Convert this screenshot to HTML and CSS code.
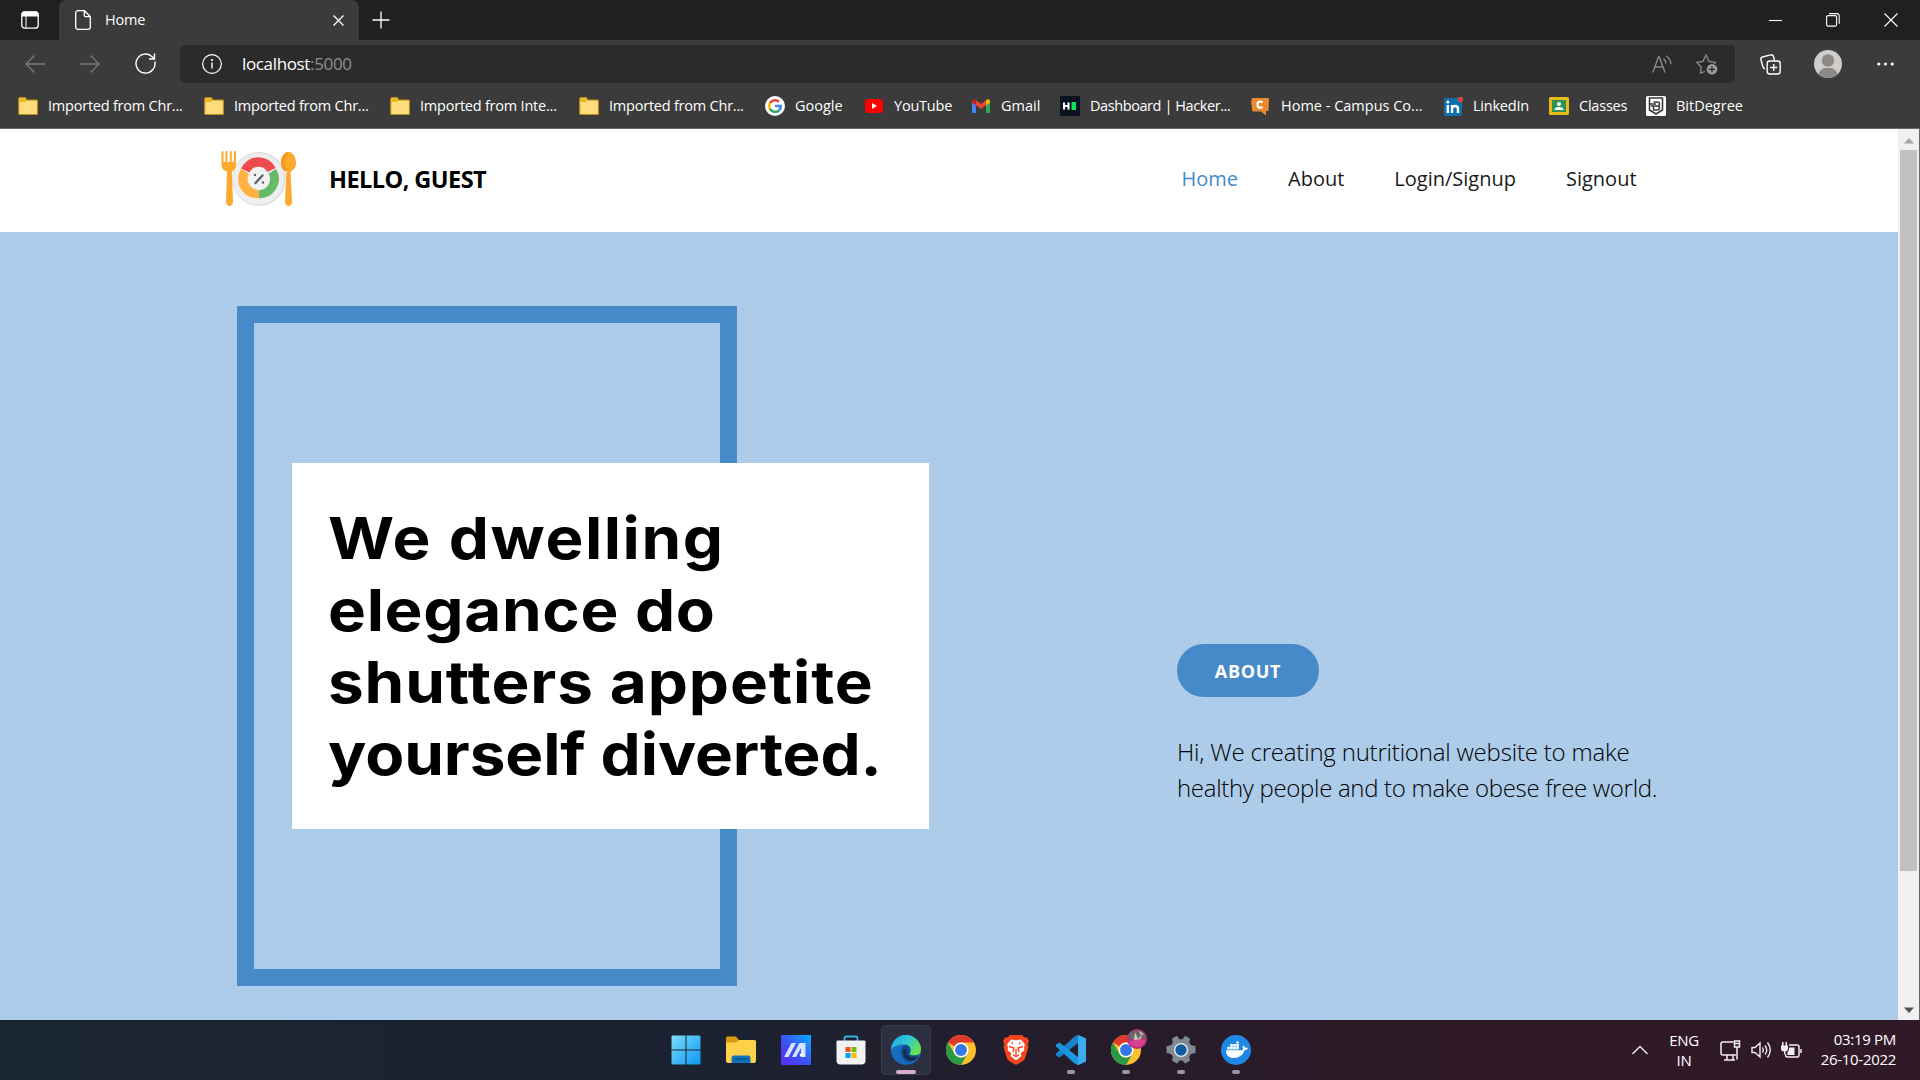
FILE: index.html
```html
<!DOCTYPE html>
<html lang="en">
<head>
<meta charset="utf-8">
<title>Home</title>
<link rel="stylesheet" href="styles.css">
</head>
<body>
<div class="screen">
  <div class="tabbar">
    <div class="tab-actions"><svg width="18" height="18" viewBox="0 0 18 18"><rect x=".8" y=".8" width="16.4" height="16.4" rx="3" fill="none" stroke="#fff" stroke-width="1.3"/><path d="M.5 5.5V3A2.5 2.5 0 0 1 3 .5h12A2.500 2.500 0 0 1 17.500 3v2.500z" fill="#fff"/><path d="M5 5v12" stroke="#fff"/></svg></div>
    <div class="tab">
      <svg width="16" height="20" viewBox="0 0 16 20" fill="none" stroke="#fff" stroke-width="1.300"><path d="M3 .7h6.500l5.800 5.800V17a2.300 2.300 0 0 1-2.300 2.300H3A2.300 2.300 0 0 1 .7 17V3A2.300 2.300 0 0 1 3 .7zM9.300 1v4.200a1.500 1.500 0 0 0 1.500 1.500H15"/></svg>
      <span class="tab-title t">Home</span>
      <svg class="tab-close" width="11" height="11" viewBox="0 0 11 11" stroke="#fff" stroke-width="1.300"><path d="M.5.5l10 10M10.500.5l-10 10"/></svg>
    </div>
    <svg class="new-tab" width="18" height="18" viewBox="0 0 18 18" stroke="#fff" stroke-width="1.300"><path d="M9 .5v17M.5 9h17"/></svg>
    <div class="window-controls">
      <svg width="13" height="13" viewBox="0 0 13 13" stroke="#fff" stroke-width="1.100"><path d="M0 6.500h13"/></svg>
      <svg width="14" height="14" viewBox="0 0 14 14" fill="none" stroke="#fff" stroke-width="1.100"><rect x=".6" y="2.600" width="10" height="10.500" rx="1.500"/><path d="M3 .6h8a2.200 2.200 0 0 1 2.200 2.200v8"/></svg>
      <svg width="14" height="14" viewBox="0 0 14 14" stroke="#fff" stroke-width="1.100"><path d="M.5.5l13 13M13.500.5l-13 13"/></svg>
    </div>
  </div>

  <div class="toolbar">
    <svg class="nav-icon" width="20" height="18" viewBox="0 0 20 18" fill="none" stroke="#7b7b7b" stroke-width="1.300"><path d="M20 9H1M9.500.5L1 9l8.500 8.500"/></svg>
    <svg class="nav-icon forward" width="20" height="18" viewBox="0 0 20 18" fill="none" stroke="#7b7b7b" stroke-width="1.300"><path d="M0 9h19M10.500.5L19 9l-8.500 8.500"/></svg>
    <svg class="nav-icon reload" width="21" height="21" viewBox="0 0 21 21" fill="none" stroke="#fff" stroke-width="1.400"><path d="M19.800 8.500A9.500 9.500 0 1 1 16.500 3.200L19 5.500M19.500.5v5.500H14"/></svg>
    <div class="address">
      <svg width="20" height="20" viewBox="0 0 20 20" fill="none" stroke="#fff" stroke-width="1.200"><circle cx="10" cy="10" r="9.300"/><path d="M10 8.500v6" stroke-width="1.400"/><circle cx="10" cy="6" r=".5" fill="#fff"/></svg>
      <span class="url"><span class="t">localhost</span><span class="port t">:5000</span></span>
      <svg class="read" width="20" height="18" viewBox="0 0 20 18" fill="none" stroke="#8b8b8b" stroke-width="1.300"><path d="M.8 17.500L6.500 2h.8L13 17.500M3 12h8M11.500 3.500q2.500 2 2.200 5M14 .8q4.800 3 4.800 8.500"/></svg>
      <svg class="fav" width="22" height="21" viewBox="0 0 22 21" fill="none" stroke="#8b8b8b" stroke-width="1.300"><path d="M9 17.500L4.500 19l.7-6L.8 8.400 7 7.400 10 1l3 6.400 6.500 1L18 10"/><circle cx="16" cy="15.300" r="5.300" fill="#9a9a9a" stroke="none"/><path d="M16 12.300v6M13 15.300h6" stroke="#2b2b2b"/></svg>
    </div>
    <svg class="collections" width="21" height="21" viewBox="0 0 21 21" fill="none" stroke="#fff" stroke-width="1.400"><rect x="7.200" y="7" width="13" height="13" rx="2.500"/><path d="M13.700 10v7M10.200 13.500h7M14.500 6.500l-1-4a2.200 2.200 0 0 0-2.700-1.600L2.400 3A2.200 2.200 0 0 0 .9 5.700L3 13a2.300 2.300 0 0 0 2 1.700"/></svg>
    <svg class="avatar" width="28" height="28" viewBox="0 0 28 28"><circle cx="14" cy="14" r="14" fill="#cfcdcb"/><circle cx="14" cy="10.500" r="6.200" fill="#8b8886"/><path d="M4.500 24.200q1.500-5.700 7-6.200h5q5.500.5 7 6.200A14 14 0 0 1 4.500 24.200z" fill="#8b8886"/></svg>
    <svg class="more" width="17" height="4" viewBox="0 0 17 4" fill="#fff"><circle cx="1.800" cy="2" r="1.600"/><circle cx="8.500" cy="2" r="1.600"/><circle cx="15.200" cy="2" r="1.600"/></svg>
  </div>

  <svg class="defs" width="0" height="0"><defs>
    <symbol id="folder" viewBox="0 0 20 18"><path d="M.7 2.500q0-1.800 1.500-1.800h5L9 3h9.500q1 0 1 1v12.500q0 1-1 1H1.700q-1 0-1-1z" fill="#ffdc7c" stroke="#b98a1c" stroke-width="1.200"/><path d="M1.200 5V2.300Q1.200 1.200 2.300 1.200H7l1.500 2L7 5z" fill="#e8b820"/></symbol>
    <symbol id="chrome" viewBox="0 0 48 48"><circle cx="24" cy="24" r="24" fill="#fbc02d"/><path d="M3.200 12A24 24 0 0 1 44.800 12H24A12 12 0 0 0 13.600 18z" fill="#dd3a2c"/><path d="M3.200 12A24 24 0 0 0 24 48l10.400-18A12 12 0 0 1 13.600 30z" fill="#2a9a46"/><circle cx="24" cy="24" r="12" fill="#fff"/><circle cx="24" cy="24" r="9.500" fill="#3478e8"/></symbol>
  </defs></svg>

  <div class="bookmarks">
    <div class="bm snug"><svg width="20" height="18"><use href="#folder"/></svg><span class="t">Imported from Chr...</span></div>
    <div class="bm snug"><svg width="20" height="18"><use href="#folder"/></svg><span class="t">Imported from Chr...</span></div>
    <div class="bm snug"><svg width="20" height="18"><use href="#folder"/></svg><span class="t">Imported from Inte...</span></div>
    <div class="bm snug"><svg width="20" height="18"><use href="#folder"/></svg><span class="t">Imported from Chr...</span></div>
    <div class="bm"><svg width="20" height="20" viewBox="0 0 20 20" fill="none" stroke-width="2.500"><circle cx="10" cy="10" r="10" fill="#fff"/><path d="M14 5.800A5.800 5.800 0 0 0 5 7.200" stroke="#ea4335"/><path d="M5 7.200a5.800 5.800 0 0 0 0 5.600" stroke="#fbbc05"/><path d="M5 12.800a5.800 5.800 0 0 0 9 1.500" stroke="#34a853"/><path d="M14 14.300a5.800 5.800 0 0 0 1.800-4.300H10" stroke="#4285f4"/></svg><span class="t">Google</span></div>
    <div class="bm snug wide"><svg width="18" height="14" viewBox="0 0 18 14"><rect width="18" height="14" rx="3.500" fill="#f00"/><path d="M7 4l5 3-5 3z" fill="#fff"/></svg><span class="t">YouTube</span></div>
    <div class="bm wide"><svg width="18" height="14" viewBox="0 0 18 14"><path d="M0 2.500l4 3V14H1.200Q0 14 0 12.800z" fill="#4285f4"/><path d="M18 2.500l-4 3V14h2.800q1.200 0 1.200-1.200z" fill="#34a853"/><path d="M4 1.200L9 5l5-3.800v5L9 10 4 6.200z" fill="#ea4335"/><path d="M0 2.500C0 .2 2.300-.3 4 1.200v5L0 3.500z" fill="#c5221f"/><path d="M18 2.500c0-2.300-2.300-2.800-4-1.300v5l4-2.700z" fill="#fbbc04"/></svg><span class="t">Gmail</span></div>
    <div class="bm tight"><svg width="20" height="20" viewBox="0 0 20 20"><path fill="#0b1320" d="M0 0h20v20H0z"/><path d="M4 6.500v7M8.500 6.500v7M4 10h4.500" stroke="#fff" stroke-width="2"/><path fill="#05e560" d="M11.500 6H16v8h-4.500z"/></svg><span class="t">Dashboard | Hacker...</span></div>
    <div class="bm wider"><svg width="18" height="19" viewBox="0 0 18 19"><path d="M1 1h17l-.500 13H15v4.500L10 14.500H1.500L0 5z" fill="#e98a2e"/><path d="M11.500 5.300Q6.500 3 6.500 7.500t5 2.700" fill="none" stroke="#fff" stroke-width="2.200"/></svg><span class="t">Home - Campus Co...</span></div>
    <div class="bm snug"><svg width="19" height="19" viewBox="0 0 19 19"><rect y="1" width="18" height="18" rx="1" fill="#0f6fae"/><path d="M3.800 8v8M8 8v8M8 11.500q.5-2.500 3-2.500 3 0 3 3v4" fill="none" stroke="#fff" stroke-width="2.400"/><circle cx="3.800" cy="5" r="1.500" fill="#fff"/><circle cx="16.500" cy="2.500" r="2.800" fill="#d8483f"/></svg><span class="t">LinkedIn</span></div>
    <div class="bm snug"><svg width="20" height="18" viewBox="0 0 20 18"><rect width="20" height="18" rx="1.500" fill="#e9b91e"/><path fill="#2f9450" d="M3 3h14v12H3z"/><circle cx="10" cy="7" r="2" fill="#fff"/><path d="M5.500 13q0-3 4.500-3t4.500 3z" fill="#fff"/></svg><span class="t">Classes</span></div>
    <div class="bm"><svg width="20" height="20" viewBox="0 0 20 20" fill="none" stroke="#3b3b40"><rect width="20" height="20" rx="1.500" fill="#fff" stroke="none"/><path d="M3.500 2h13v12L10 18l-6.500-4z" stroke-width="1.600"/><path d="M7.500 6H11q2.500 0 2.500 2T11 10H5m2.500 0H11q2.500 0 2.500 2t-2.500 2H7.500zM4 8h6" stroke-width="1.500"/></svg><span class="t">BitDegree</span></div>
  </div>

  <div class="viewport">
    <div class="page">
      <header class="site-header">
        <svg class="logo" width="76" height="58" viewBox="0 0 76 58">
          <circle cx="38" cy="29" r="27" fill="#dfdfe1"/><circle cx="37.500" cy="29" r="25.500" fill="#eeeeef"/>
          <g transform="translate(2 0)"><g fill="none" stroke-width="9.500"><path d="M22.300 20.500A14.500 14.500 0 0 1 48.500 20" stroke="#ee4c4c"/><path d="M49 21.500A14.500 14.500 0 0 1 36 43.500" stroke="#66bb6a"/><path d="M36 43.500A14.500 14.500 0 0 1 22 21.500" stroke="#ffb142"/></g>
          <circle cx="36" cy="29" r="11" fill="#f2f2f3"/><path d="M32.500 33l7-7.500" stroke="#5b6470" stroke-width="2.400" stroke-linecap="round"/><circle cx="32" cy="25" r="1.200" fill="#5b6470"/><circle cx="40" cy="32.500" r="1.200" fill="#5b6470"/></g>
          <g fill="#fda92e"><path d="M.5 1.500q1-1 2 0V12h2V1.500q1-1 2 0V12h2.300V1.500q1-1 2 0V12h2.200V1.500q1-1 2 0V15q0 5-4.200 6.500l1.200 30.500q-.5 4-3.500 4T5 52l1-30.500Q.5 20 .5 15z"/><path d="M67.500 2c5 0 7.500 6 7.500 10.500 0 5-2.500 8-5.500 9l1.500 30.500q-.5 4-3.500 4T64 52l1.500-30.500c-3-1-5.500-4-5.500-9C60 8 62.500 2 67.500 2z"/></g>
          <path d="M67.500 2c-5 0-7.500 6-7.500 10.500 0 5 3 9 5.500 9Q61 12 67.500 2z" fill="#f59a20"/>
        </svg>
        <h2 class="greeting"><span class="t">HELLO, GUEST</span></h2>
        <nav class="site-nav"><a class="active t">Home</a><a class="t">About</a><a class="t">Login/Signup</a><a class="t">Signout</a></nav>
      </header>
      <main class="hero">
        <div class="frame">
          <h1 class="headline"><span class="l1 t">We dwelling</span><span class="l2 t">elegance do</span><span class="l3 t">shutters appetite</span><span class="l4 t">yourself diverted.</span></h1>
        </div>
        <section class="about">
          <a class="pill"><span class="t">ABOUT</span></a>
          <p><span class="intro t">Hi, We creating nutritional website to make</span><br><span class="t">healthy people and to make obese free world.</span></p>
        </section>
      </main>
    </div>
    <div class="scrollbar">
      <svg class="arrow" width="10" height="6" viewBox="0 0 10 6"><path d="M5 0l5 5.500H0z" fill="#a3a3a3"/></svg>
      <div class="thumb"></div>
      <svg class="arrow down" width="10" height="6" viewBox="0 0 10 6"><path d="M5 6l5-5.500H0z" fill="#505050"/></svg>
    </div>
  </div>

  <div class="taskbar">
    <div class="apps">
      <div class="app"><svg width="30" height="30" viewBox="0 0 30 30"><defs><linearGradient id="win" x2="1" y2="1"><stop stop-color="#7fdcfb"/><stop offset="1" stop-color="#0a98f0"/></linearGradient></defs><path d="M1.500.5h13v14h-14v-13zM15.500.5h13l1 1v13h-14zM.5 15.500h14v14h-13l-1-1zM15.500 15.500h14v13l-1 1h-13z" fill="url(#win)"/></svg></div>
      <div class="app"><svg width="30" height="28" viewBox="0 0 30 28"><path d="M0 8V2Q0 .5 1.500.5H10L13 4h8v5z" fill="#d99a10"/><path d="M0 6.500h10L13 4h15.500Q30 4 30 5.500V25q0 2-2 2H2q-2 0-2-2z" fill="#ffd04a"/><path d="M5.500 27v-5q0-2.500 2.500-2.500h14q2.500 0 2.500 2.500v5z" fill="#1273b8"/><path d="M8 23h14" stroke="#0a4d88" stroke-width="1.200"/></svg></div>
      <div class="app"><svg width="30" height="30" viewBox="0 0 30 30"><defs><linearGradient id="asus" x1="0" y1="1" x2="1" y2="0"><stop stop-color="#5b2bf2"/><stop offset=".5" stop-color="#3a55f5"/><stop offset="1" stop-color="#05b0ff"/></linearGradient></defs><path fill="url(#asus)" d="M0 0h30v30H0z"/><path d="M3 22L10.500 8H15L7.500 22zM11 22L18.500 8h6v14H20v-9l-5 9z" fill="#d9e2ff"/><circle cx="20.500" cy="20" r="1.800" fill="#fff"/></svg></div>
      <div class="app"><svg width="30" height="30" viewBox="0 0 30 30"><path d="M8.500 7V3q0-1.500 1.500-1.500h10Q21.500 1.500 21.500 3v4" fill="none" stroke="#37b3e6" stroke-width="1.800"/><path d="M.5 6.500Q.5 5.500 1.500 5.500h27q1 0 1 1v19q0 4-4 4h-21q-4 0-4-4z" fill="#f2f2f2"/><path fill="#f25022" d="M9.500 12h5v5h-5z"/><path fill="#7fba00" d="M15.500 12h5v5h-5z"/><path fill="#00a4ef" d="M9.500 18h5v5h-5z"/><path fill="#ffb900" d="M15.500 18h5v5h-5z"/></svg></div>
      <div class="app current"><svg width="30" height="30" viewBox="0 0 30 30"><defs><linearGradient id="edge1" x1="0" y1="0" x2="1" y2=".6"><stop stop-color="#1d9ee0"/><stop offset=".5" stop-color="#2cc6d4"/><stop offset="1" stop-color="#6be150"/></linearGradient></defs><circle cx="15" cy="15" r="15" fill="#176dbd"/><path d="M0 15A15 15 0 0 1 30 14.500c0 4-3 6-7 6-4.500 0-5-1.500-4-3 1-2 .5-8-6.500-8C6 9.500 1 12 0 15z" fill="url(#edge1)"/><path d="M10 16c0-3 2-5 4-6.300 5 0 6.500 5 5 7.800-1 1.500-.5 3 4 3 2 0 4-.5 5-1.500C26 25 21 27 17.500 27 13 27 10 21 10 16z" fill="#0d4b91"/><path d="M12 17c0 6 5 9 10 8.500 2-.5 4-2 5.500-4.500-4 2.500-9.500 1.500-11-.5-1.500-1.500-1.500-4 0-6-2-1-4.500.5-4.500 2.500z" fill="#1b2b43"/></svg><i class="run"></i></div>
      <div class="app"><svg width="30" height="30"><use href="#chrome"/></svg></div>
      <div class="app"><svg width="26" height="30" viewBox="0 0 26 30"><path d="M7 0h12l2.500 2.500 2.500-.3 2 4-1.200 3 .7 2.500-3.500 12Q20.500 26 13 30 5.500 26 4 23.700L.5 11.700l.7-2.500L0 6.200l2-4 2.500.3z" fill="#f7451c"/><path d="M13 5.200l5-.7 4 5-1 3.500.500 2-4 3.500 1 2.500L13 25.500 7.500 21l1-2.500-4-3.500.500-2-1-3.500 4-5z" fill="#fff"/><path d="M6 11.500l5 1.500-1 4M20 11.500L15 13l1 4M10 20l3 1.500 3-1.500M13 14v6M8.500 7.500L10 9M17.500 7.500L16 9" fill="none" stroke="#f7451c" stroke-width="1.400"/></svg></div>
      <div class="app"><svg width="30" height="30" viewBox="0 0 30 30"><path d="M22 0l8 3.500v23L22 30l-4-3.500L22 22V8L3.500 22.500 0 20.500v-2L18.500 1.500z" fill="#1a82cc"/><path d="M22 22L3.500 7.500 0 9.500v2L18.500 28.500 22 30z" fill="#1b95dd"/><path d="M22 0l8 3.500v23L22 30z" fill="#3aacee"/></svg><i class="run"></i></div>
      <div class="app"><svg width="30" height="30"><use href="#chrome"/></svg><svg class="badge" width="20" height="20" viewBox="0 0 20 20"><circle cx="10" cy="10" r="10" fill="#b92f78"/><path d="M.5 9A10 10 0 0 1 19.500 8Q14 12 10 11t-9.500-2z" fill="#6c6460"/><path d="M3 5l4 5 1-7 3 7 5-6-3 7-5 1zM12 2l2 5 3-2z" fill="#cfc4b8"/><path d="M1.500 13q8-4 17-2-2 7-9 7-6-1-8-5z" fill="#d64392"/></svg><i class="run"></i></div>
      <div class="app"><svg width="30" height="30" viewBox="0 0 30 30"><path d="M11 .8l2.500 3.500h3L19 .8l5 2.700-.8 4.200 1.800 2.500 4.500.8v7l-4.500 1-1.800 2.500.8 4.200-5 2.700-2.500-3h-3l-2.500 3-5-2.700.8-4.200L5 19 .5 18v-7l4.500-.8 1.800-2.500L6 3.500z" fill="#808891"/><circle cx="15" cy="15" r="7" fill="#eee"/><circle cx="15" cy="15" r="5.700" fill="#0f5b9c"/></svg><i class="run"></i></div>
      <div class="app"><svg width="30" height="30" viewBox="0 0 30 30"><circle cx="15" cy="15" r="15" fill="#1e88e5"/><path d="M5 15.300h16.300q1-.5.700-2-1-1.500.3-2.800 1.500 1 1.700 2.300 2-.5 3 .2-.5 2-3.500 2.300Q21 23 12.500 23 5 23 5 15.300z" fill="#fff"/><path d="M6.200 11.800h2.600v2.600H6.200zM9.200 11.800h2.600v2.600H9.200zM12.200 11.800h2.600v2.600h-2.600zM15.200 11.800h2.600v2.600h-2.600zM9.200 8.900h2.600v2.500H9.200zM12.200 8.900h2.600v2.500h-2.600zM15.200 8.900h2.600v2.500h-2.600zM15.200 6.500h2.600v2h-2.600z" fill="#fff"/></svg><i class="run"></i></div>
    </div>
    <div class="tray">
      <svg class="chev" width="16" height="10" viewBox="0 0 16 10" fill="none" stroke="#eee" stroke-width="1.400"><path d="M.5 9L8 1.500 15.500 9"/></svg>
      <div class="lang"><span class="t">ENG</span><span class="t">IN</span></div>
      <svg class="net" width="21" height="21" viewBox="0 0 21 21" fill="none" stroke="#f2eef0" stroke-width="1.500"><path d="M13.500 2H3Q1 2 1 4v9q0 2 2 2h13M7 15.500v4M13 15.500v4M4 20h11M14.500 1h5v6h-5zM17 7v12.500M14.500 3.500h5"/></svg>
      <svg class="vol" width="21" height="18" viewBox="0 0 21 18" fill="none" stroke="#f2eef0" stroke-width="1.400"><path d="M1 6.500h3L9 2v14l-5-4.500H1zM11.500 6.500q1.500 2.500 0 5M14 4.500q3.500 4.500 0 9M16.500 1.500q5.500 7.500 0 15"/></svg>
      <svg class="bat" width="21" height="17" viewBox="0 0 21 17" fill="none" stroke="#f2eef0" stroke-width="1.500"><path d="M8 3h8q2 0 2 2v8q0 2-2 2H6.500q-2 0-2-2v-1M20 7v4"/><path d="M8 5.500h5.500V13H6.500v-3Q8 9 8 7z" fill="#f2eef0" stroke="none"/><path d="M0 3.500h7V7q0 2-2.500 2.500V12H3V9.500Q0 9 0 7zM1 0h1.500v3.500H1zM4.500 0H6v3.500H4.500z" fill="#f2eef0" stroke="none"/></svg>
      <div class="clock"><span class="t">03:19 PM</span><span class="t">26-10-2022</span></div>
    </div>
  </div>
</div>
</body>
</html>
```
FILE: styles.css
```css
* { box-sizing: border-box; }
body { margin: 0; overflow: hidden; background: #3b3b3b; font-family: "Open Sans", "Noto Sans", sans-serif; }
svg { display: block; flex: none; }
.defs { position: absolute; }
.screen { width: 1920px; height: 1080px; display: flex; flex-direction: column; overflow: hidden; }
.t { white-space: nowrap; }

.tabbar { height: 40px; background: #202020; display: flex; align-items: center; color: #fff; }
.tab-actions { width: 59px; padding-left: 21px; }
.tab { width: 300px; height: 40px; background: #3b3b3b; border-radius: 8px 8px 0 0; display: flex; align-items: center; padding: 0 15px 0 16px; }
.tab-title { margin-left: 14px; padding-bottom: 2px; font-size: 14.500px; letter-spacing: -.2px; }
.tab-close { margin-left: auto; }
.new-tab { margin-left: 13px; }
.window-controls { margin-left: auto; display: flex; align-items: center; gap: 44px; padding-right: 22px; }

.toolbar { height: 48px; background: #3b3b3b; display: flex; align-items: center; padding-left: 25px; }
.forward { margin-left: 35px; }
.nav-icon { margin-bottom: 1px; }
.reload { margin-left: 34.500px; }
.address { width: 1555px; height: 38px; margin-left: 24.500px; background: #2b2b2b; border-radius: 5px; display: flex; align-items: center; padding: 0 17px 0 22px; }
.url { margin-left: 20px; padding-bottom: 2px; color: #fff; font-size: 17px; letter-spacing: -.35px; display: flex; }
.port { color: #8f8f8f; }
.read { margin-left: auto; }
.fav { margin-left: 24px; }
.collections { margin-left: 25px; }
.avatar { margin-left: 33px; }
.more { margin-left: 35px; }

.bookmarks { height: 41px; background: #3b3b3b; border-bottom: 1px solid #666; padding: 0 0 4px 18px; display: grid; grid-template-columns: 186px 186px 189px 186px 100px 107px 88px 191px 193px 105px 97px 150px; align-items: center; color: #fff; font-size: 14.500px; }
.bm { display: flex; align-items: center; gap: 10px; }
.bm .t { padding-bottom: 2px; }
.snug { letter-spacing: -.22px; }
.tight { letter-spacing: -.42px; }
.wide { gap: 11px; }
.wider { gap: 12px; }

.viewport { height: 891px; display: flex; }
.page { width: 1898px; display: flex; flex-direction: column; }
.site-header { height: 103px; background: #fff; display: flex; align-items: center; padding: 0 0 4px 221px; }
.greeting { margin: 0 0 0 32px; width: 852.500px; font-size: 23.500px; font-weight: 700; letter-spacing: -.55px; color: #000; }
.site-nav { display: flex; gap: 50px; font-size: 20px; color: #1a1a1a; }
.active { color: #478ac9; }
.hero { flex: 1; background: #adcce9; display: flex; padding: 74px 0 0 237px; }
.frame { width: 500px; height: 680px; border: 17px solid #478ac9; padding: 140px 0 0 38px; }
.headline { margin: 0; width: 637px; height: 366px; background: #fff; padding: 39px 0 0 36px; font: 690 58px/72px Inter, "Open Sans", sans-serif; color: #000; display: flex; flex-direction: column; align-items: flex-start; }
.headline .t { transform: scaleX(1.1); transform-origin: 0 0; }
.l1 { letter-spacing: 1.400px; }
.l2 { letter-spacing: .6px; }
.l3 { letter-spacing: .8px; }
.l4 { letter-spacing: -.1px; }
.about { margin: 338px 0 0 440px; }
.pill { width: 142px; height: 53px; border-radius: 27px; background: #478ac9; color: #fff; display: flex; align-items: center; justify-content: center; font-size: 18px; font-weight: 700; letter-spacing: .7px; }
.about p { margin: 37px 0 0; font-size: 24px; line-height: 36px; font-weight: 350; letter-spacing: -.31px; color: #000; }
.about .intro { letter-spacing: -.2px; }
.scrollbar { width: 22px; background: #f0f0f0; border-right: 1px solid #666; display: flex; flex-direction: column; padding: 9px 0 7px 2px; }
.arrow { margin-left: 4px; }
.thumb { width: 17px; height: 721px; margin-top: 6px; background: #c1c1c1; }
.down { margin-top: auto; }

.taskbar { height: 60px; background: linear-gradient(90deg, #1a2532 0, #1b2231 700px, #251c2b 1100px, #2e1926 1400px, #311a27 1920px); display: flex; padding-left: 658px; }
.apps { display: flex; align-items: center; }
.app { width: 55px; height: 50px; position: relative; display: flex; align-items: center; justify-content: center; }
.current::before { content: ""; position: absolute; inset: 0 2.500px; border: 1px solid #393c4b; border-radius: 5px; background: #2c2f3f; }
.current svg { position: relative; }
.run { position: absolute; left: 23.500px; bottom: 1px; width: 8px; height: 4px; border-radius: 2px; background: #9b98a3; }
.current .run { left: 17.500px; width: 20px; background: #d8abd0; }
.badge { position: absolute; left: 29px; top: 4px; }
.tray { margin-left: auto; display: flex; align-items: center; color: #fff; font-size: 15px; line-height: 20px; padding-right: 24px; }
.lang { margin-left: 21px; width: 30px; display: flex; flex-direction: column; align-items: center; letter-spacing: -.3px; }
.net { margin-left: 21px; }
.vol { margin-left: 10px; }
.bat { margin-left: 9px; }
.clock { margin-left: 19px; width: 75px; padding-bottom: 2px; display: flex; flex-direction: column; align-items: flex-end; letter-spacing: -.3px; }
```
